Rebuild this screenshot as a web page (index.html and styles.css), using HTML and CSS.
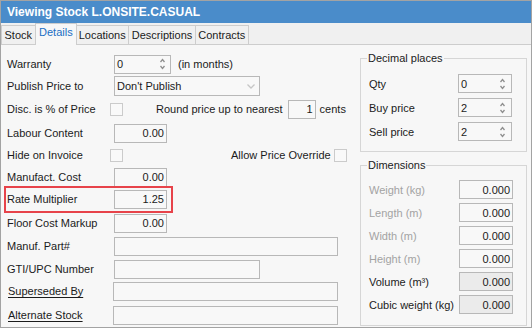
FILE: index.html
```html
<!DOCTYPE html>
<html>
<head>
<meta name="viewport" content="width=device-width, initial-scale=1">
<link rel="stylesheet" href="styles.css">
</head>
<body>

<div class="window">
  <div class="titlebar">Viewing Stock L.ONSITE.CASUAL</div>

  <div class="tabs">
    <div class="tab">Stock</div>
    <div class="tab active">Details</div>
    <div class="tab">Locations</div>
    <div class="tab">Descriptions</div>
    <div class="tab">Contracts</div>
  </div>

  <div class="content">
    <div class="leftcol">
      <div class="row">
        <span class="lbl">Warranty</span>
        <div class="field spin warranty">
          <span>0</span>
          <svg class="arrows" width="5" height="14" viewBox="0 0 5 14"><path d="M0.5 5L2.5 2.5L4.5 5M0.5 9L2.5 11.5L4.5 9" fill="none" stroke="#8e8e8e" stroke-width="1.3"/></svg>
        </div>
        <span class="after">(in months)</span>
      </div>

      <div class="row">
        <span class="lbl">Publish Price to</span>
        <div class="field select">
          <span>Don't Publish</span>
          <svg class="drop" width="8" height="5" viewBox="0 0 8 5"><path d="M0.5 0.5L4 4L7.5 0.5" fill="none" stroke="#c6c6c6" stroke-width="1.3"/></svg>
        </div>
      </div>

      <div class="row">
        <span class="lbl short">Disc. is % of Price</span>
        <div class="check"></div>
        <span class="round-text">Round price up to nearest</span>
        <div class="field num cents-box">1</div>
        <span class="after cents">cents</span>
      </div>

      <div class="row">
        <span class="lbl">Labour Content</span>
        <div class="field num">0.00</div>
      </div>

      <div class="row">
        <span class="lbl short">Hide on Invoice</span>
        <div class="check"></div>
        <span class="allow-text">Allow Price Override</span>
        <div class="check allow-check"></div>
      </div>

      <div class="row">
        <span class="lbl">Manufact. Cost</span>
        <div class="field num">0.00</div>
      </div>

      <div class="row highlight">
        <span class="lbl">Rate Multiplier</span>
        <div class="field num">1.25</div>
      </div>

      <div class="row">
        <span class="lbl">Floor Cost Markup</span>
        <div class="field num">0.00</div>
      </div>

      <div class="row">
        <span class="lbl">Manuf. Part#</span>
        <div class="field wide"></div>
      </div>

      <div class="row">
        <span class="lbl">GTI/UPC Number</span>
        <div class="field medium"></div>
      </div>

      <div class="row">
        <span class="lbl link">Superseded By</span>
        <div class="field wider"></div>
      </div>

      <div class="row">
        <span class="lbl link">Alternate Stock</span>
        <div class="field wider"></div>
      </div>
    </div>

    <div class="rightcol">
      <fieldset class="group decimals">
        <legend>Decimal places</legend>
        <div class="grow">
          <span class="glbl">Qty</span>
          <div class="field spin small"><span>0</span><svg class="arrows" width="5" height="14" viewBox="0 0 5 14"><path d="M0.5 5L2.5 2.5L4.5 5M0.5 9L2.5 11.5L4.5 9" fill="none" stroke="#8e8e8e" stroke-width="1.3"/></svg></div>
        </div>
        <div class="grow">
          <span class="glbl">Buy price</span>
          <div class="field spin small"><span>2</span><svg class="arrows" width="5" height="14" viewBox="0 0 5 14"><path d="M0.5 5L2.5 2.5L4.5 5M0.5 9L2.5 11.5L4.5 9" fill="none" stroke="#8e8e8e" stroke-width="1.3"/></svg></div>
        </div>
        <div class="grow">
          <span class="glbl">Sell price</span>
          <div class="field spin small"><span>2</span><svg class="arrows" width="5" height="14" viewBox="0 0 5 14"><path d="M0.5 5L2.5 2.5L4.5 5M0.5 9L2.5 11.5L4.5 9" fill="none" stroke="#8e8e8e" stroke-width="1.3"/></svg></div>
        </div>
      </fieldset>

      <fieldset class="group dims">
        <legend>Dimensions</legend>
        <div class="grow">
          <span class="glbl muted">Weight (kg)</span>
          <div class="field num small">0.000</div>
        </div>
        <div class="grow">
          <span class="glbl muted">Length (m)</span>
          <div class="field num small">0.000</div>
        </div>
        <div class="grow">
          <span class="glbl muted">Width (m)</span>
          <div class="field num small">0.000</div>
        </div>
        <div class="grow">
          <span class="glbl muted">Height (m)</span>
          <div class="field num small">0.000</div>
        </div>
        <div class="grow">
          <span class="glbl">Volume (m³)</span>
          <div class="field num small readonly">0.000</div>
        </div>
        <div class="grow">
          <span class="glbl">Cubic weight (kg)</span>
          <div class="field num small readonly">0.000</div>
        </div>
      </fieldset>
    </div>
  </div>
</div>

</body>
</html>
```

FILE: styles.css
```css
body {
    margin: 0;
    font-family: "Liberation Sans", Arial, sans-serif;
    font-size: 11px;
    color: #1b1b1b;
}

.window {
    width: 532px;
    height: 328px;
    box-sizing: border-box;
    border: 1px solid #a3a3a3;
    background: #f7f7f7;
}

.titlebar {
    height: 22px;
    line-height: 22px;
    padding-left: 6px;
    background: #4a8cca;
    color: #fff;
    font-size: 12px;
    font-weight: bold;
}

/* tab strip */
.tabs {
    display: flex;
    align-items: flex-end;
    height: 21px;
    background: #f0f0f0;
    border-bottom: 1px solid #cdcdcd;
}

.tab {
    height: 19px;
    box-sizing: border-box;
    padding: 2px 2.5px 0 2.5px;
    line-height: 15px;
    border: 1px solid #cdcdcd;
    border-bottom: none;
    border-left: none;
    background: #f0f0f0;
}

.tab:first-child {
    border-left: 1px solid #cdcdcd;
}

.tab.active {
    position: relative;
    z-index: 1;
    height: 22px;
    margin: 0 -1px -1px -1px;
    padding: 1px 3.5px 0 3.5px;
    border-left: 1px solid #cdcdcd;
    background: #f7f7f7;
    color: #1a6fc4;
}

.content {
    display: flex;
    height: 281px;
}

/* left column */
.leftcol {
    width: 353px;
    padding: 9px 0 0 6px;
    display: grid;
    grid-template-rows: 22px 23px 24px 22px 22px 22px 24px 23px 23px 22px 24px 20px;
    align-content: start;
}

.row {
    display: flex;
    align-items: center;
    height: 20px;
}

.lbl {
    width: 107px;
    flex-shrink: 0;
}

.lbl.short {
    width: 103px;
}

.lbl.link {
    width: 105px;
    padding-left: 1px;
    text-decoration: underline;
    text-underline-offset: 2px;
}

.field {
    height: 19px;
    box-sizing: border-box;
    border: 1px solid #b8b8b8;
    background: #f8f8f8;
    display: flex;
    align-items: center;
    flex-shrink: 0;
}

.spin {
    padding: 0 5px 0 2px;
    justify-content: space-between;
}

.warranty {
    width: 57px;
}

.select {
    width: 146px;
    height: 20px;
    padding: 0 4px 0 2px;
    justify-content: space-between;
}

.num {
    width: 53px;
    justify-content: flex-end;
    padding-right: 2px;
}

.cents-box {
    width: 28px;
    margin-left: 5px;
}

.wide {
    width: 224px;
}

.wider {
    width: 225px;
}

.medium {
    width: 146px;
}

.after {
    margin-left: 7px;
}

.after.cents {
    margin-left: 4px;
}

.check {
    width: 13px;
    height: 13px;
    box-sizing: border-box;
    border: 1px solid #cbcbcb;
    background: #f9f9f9;
    flex-shrink: 0;
}

.round-text {
    margin-left: 33px;
}

.allow-text {
    margin-left: 108px;
}

.allow-check {
    margin-left: 3px;
}

.highlight {
    position: relative;
    justify-self: start;
}

.highlight::after {
    content: "";
    position: absolute;
    top: -3px;
    bottom: -4px;
    left: -3px;
    right: -6px;
    border: 2px solid #e7434a;
}

/* right column */
.rightcol {
    width: 167px;
}

.group {
    margin: 7px 0 0 0;
    width: 167px;
    box-sizing: border-box;
    min-width: 0;
    border: 1px solid #d6d6d6;
    padding: 10px 0 10px 8px;
}

.group legend {
    padding: 0 1px;
    margin-left: -2px;
    line-height: 12px;
}

.dims {
    padding: 9px 0 11px 8px;
}

.grow {
    display: flex;
    align-items: center;
    height: 19px;
}

.decimals .grow + .grow {
    margin-top: 5px;
}

.dims .grow + .grow {
    margin-top: 4px;
}

.glbl {
    width: 89px;
    flex-shrink: 0;
}

.dims .glbl {
    width: 90px;
}

.muted {
    color: #a3a3a3;
}

.small {
    width: 54px;
}

.spin.small {
    padding-right: 6px;
}

.readonly {
    background: #ebebeb;
}
```
